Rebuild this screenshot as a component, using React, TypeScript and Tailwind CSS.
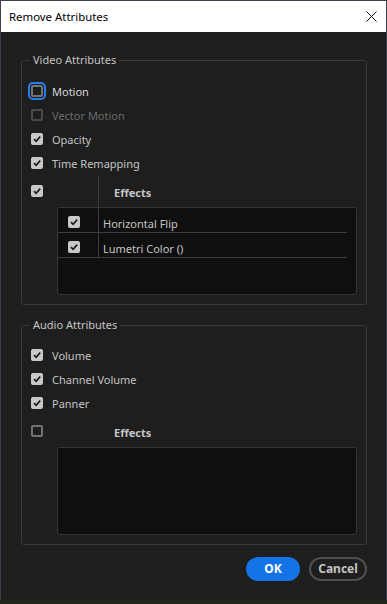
import React from "react";

type CheckState = "checked" | "unchecked" | "disabled";

function Box({ state, focus }: { state: CheckState; focus?: boolean }) {
  if (state === "checked") {
    return (
      <span className="flex h-[12px] w-[12px] shrink-0 items-center justify-center rounded-[2px] bg-[#c8c8c8]">
        <svg width="10" height="10" viewBox="0 0 10 10">
          <path d="M2 5.2 L4.1 7.3 L8.2 2.6" fill="none" stroke="#1d1d1d" strokeWidth="1.7" />
        </svg>
      </span>
    );
  }
  return (
    <span
      className={
        "block h-[12px] w-[12px] shrink-0 rounded-[2px] border-2 " +
        (state === "disabled" ? "border-[#4a4a4a]" : "border-[#737373]") +
        (focus ? " outline-2 outline-offset-[1px] outline-[#2680eb]" : "")
      }
    />
  );
}

function Row({ label, state, focus }: { label: string; state: CheckState; focus?: boolean }) {
  return (
    <div className="flex h-[24px] items-center">
      <span className="ml-[1px]">
        <Box state={state} focus={focus} />
      </span>
      <span
        className={
          "ml-[9px] pt-[1px] text-[11px] leading-none " +
          (state === "disabled" ? "text-[#6b6b6b]" : focus ? "text-[#d8d8d8]" : "text-[#c4c4c4]")
        }
      >
        {label}
      </span>
    </div>
  );
}

function EffectsHeader({ state, line }: { state: CheckState; line: boolean }) {
  return (
    <div className="flex h-[32px] items-center">
      <span className="ml-[1px]">
        <Box state={state} />
      </span>
      <div className={"ml-[55px] flex h-full items-center pl-[15px] " + (line ? "border-l border-[#3c3c3c]" : "border-l border-transparent")}>
        <span className="mt-[3px] text-[11px] font-bold leading-none text-[#c4c4c4]">Effects</span>
      </div>
    </div>
  );
}

function EffectRow({ label }: { label: string }) {
  return (
    <div className="mr-[9px] flex h-[25px] border-b border-[#3c3c3c]">
      <div className="flex w-[41px] items-center border-r border-[#3c3c3c] pl-[10px] pt-[4px]">
        <Box state="checked" />
      </div>
      <div className="flex items-center pl-[4px] pt-[7px] text-[11px] leading-none text-[#c4c4c4]">{label}</div>
    </div>
  );
}

function Table({ children }: { children?: React.ReactNode }) {
  return (
    <div className="ml-[27px] h-[88px] rounded-[3px] border border-[#353535] bg-[#0f0f0f]">{children}</div>
  );
}

function Legend({ text }: { text: string }) {
  return <legend className="px-[3px] text-[11px] leading-[16px] text-[#c4c4c4]">{text}</legend>;
}

export default function App() {
  return (
    <div className="w-[387px] h-[604px] bg-[#23261e]" style={{ fontFamily: '"Noto Sans", "Open Sans", sans-serif' }}>
      <div className="flex h-[600px] flex-col border-x border-t border-[#3c404c]">
        <div className="flex h-[31px] shrink-0 items-center justify-between bg-white pl-[8px] pr-[9px]">
          <span className="text-[11.4px] leading-none text-black" style={{ fontFamily: '"Noto Sans", sans-serif' }}>
            Remove Attributes
          </span>
          <svg width="11" height="11" viewBox="0 0 11 11">
            <path d="M0.5 0.5 L10.5 10.5 M10.5 0.5 L0.5 10.5" stroke="#111" strokeWidth="1" />
          </svg>
        </div>
        <div className="flex flex-1 flex-col bg-[#1e1e1e] pl-[20px] pr-[19px] pt-[20px]">
          <fieldset className="rounded-[3px] border border-[#393939] pb-[9px] pl-[8px] pr-[9px]">
            <Legend text="Video Attributes" />
            <div className="mt-[11px]">
              <Row label="Motion" state="unchecked" focus />
              <Row label="Vector Motion" state="disabled" />
              <Row label="Opacity" state="checked" />
              <Row label="Time Remapping" state="checked" />
              <EffectsHeader state="checked" line />
              <Table>
                <EffectRow label="Horizontal Flip" />
                <EffectRow label="Lumetri Color ()" />
              </Table>
            </div>
          </fieldset>
          <fieldset className="mt-[12px] rounded-[3px] border border-[#393939] pb-[9px] pl-[8px] pr-[9px]">
            <Legend text="Audio Attributes" />
            <div className="mt-[10px]">
              <Row label="Volume" state="checked" />
              <Row label="Channel Volume" state="checked" />
              <Row label="Panner" state="checked" />
              <EffectsHeader state="unchecked" line={false} />
              <Table />
            </div>
          </fieldset>
          <div className="mt-[12px] flex justify-end gap-[9px]">
            <button className="flex h-[24px] w-[54px] items-center justify-center rounded-full bg-[#1473e6] text-[12px] font-bold text-white">
              OK
            </button>
            <button className="flex h-[24px] w-[58px] items-center justify-center rounded-full border-2 border-[#4f4f4f] text-[12px] font-bold text-[#c4c4c4]">
              Cancel
            </button>
          </div>
        </div>
      </div>
    </div>
  );
}
